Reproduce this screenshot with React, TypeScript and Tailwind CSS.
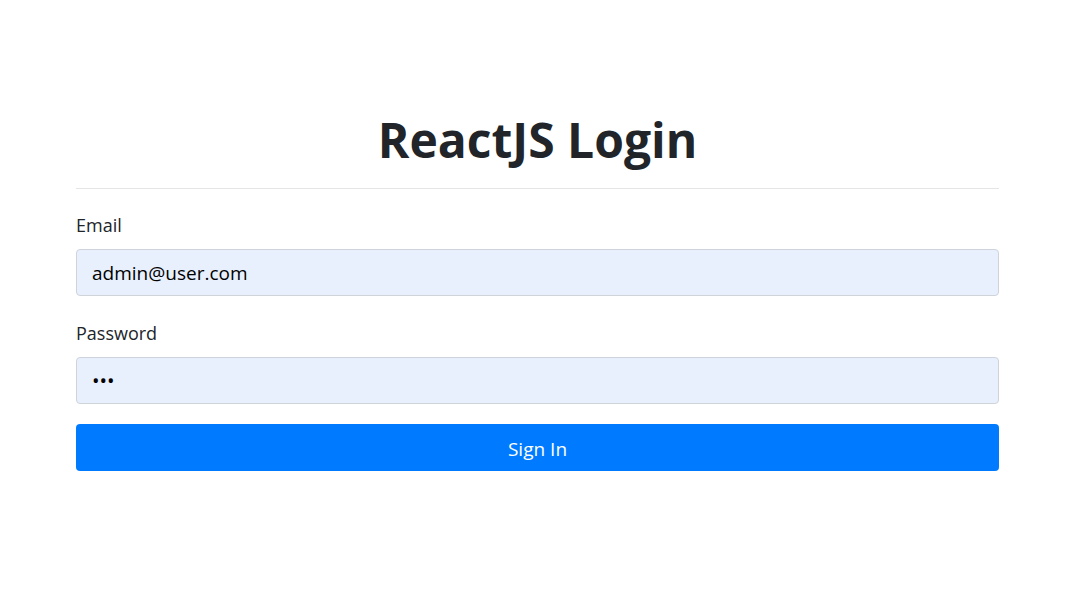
export default function App() {
    return (
        <div className="min-h-screen bg-white font-['Open_Sans',sans-serif] text-[#212529]">
            <div className="mx-auto w-[923px] pt-[111px]">
                {/* OBJECT: Title */}
                <h1 className="text-center text-[48px] font-bold leading-[58px]">ReactJS Login</h1>
                <hr className="mt-[19px] border-t border-[#e5e5e5]" />

                {/* OBJECT: Form */}
                <form className="flex flex-col pt-[21px]">
                    <label className="mb-[9px] text-[18px] leading-[30px]">Email</label>
                    <input
                        type="email"
                        defaultValue="admin@user.com"
                        className="h-[47px] rounded-[4px] border border-[#ced4da] bg-[#e8f0fe] px-[15px] pt-[1px] text-[19px] text-black outline-none"
                    />
                    <label className="mt-[22px] mb-[9px] text-[18px] leading-[30px]">Password</label>
                    <input
                        type="password"
                        defaultValue="123"
                        className="h-[47px] rounded-[4px] border border-[#ced4da] bg-[#e8f0fe] px-[15px] text-[20px] text-black outline-none"
                    />
                    <button
                        type="button"
                        className="mt-[20px] h-[47px] rounded-[4px] bg-[#007bff] pt-[3px] text-[19px] text-white"
                    >
                        Sign In
                    </button>
                </form>
            </div>
        </div>
    )
}
